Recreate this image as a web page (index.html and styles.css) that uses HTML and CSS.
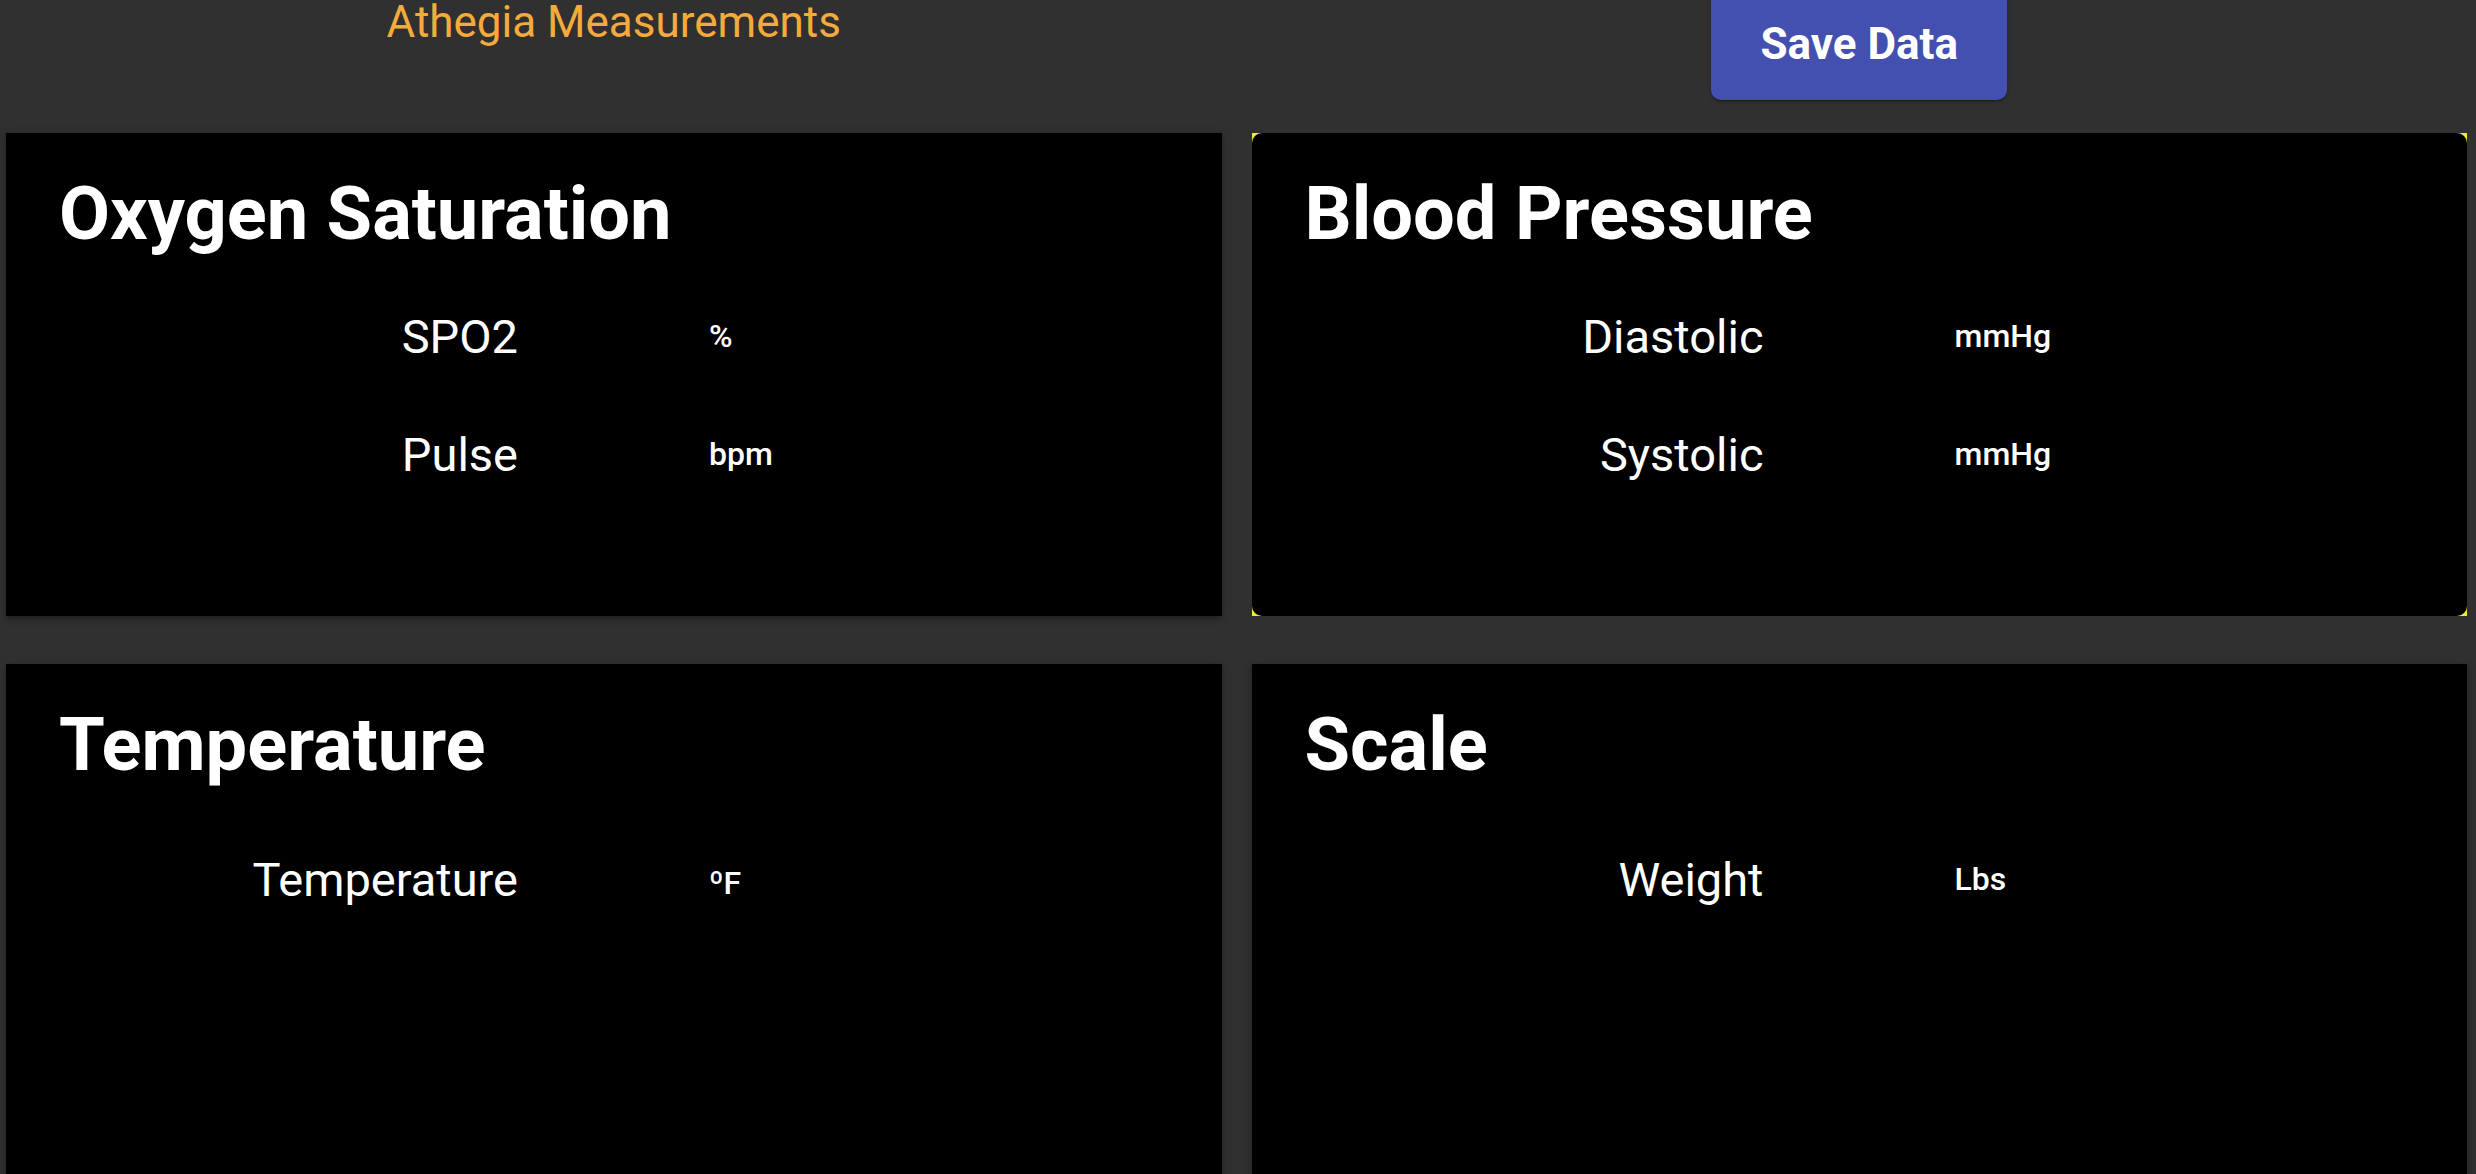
FILE: index.html
```html
<!DOCTYPE html>
<html lang="en">
<head>
<meta charset="utf-8">
<title>Athegia Measurements</title>
<link rel="stylesheet" href="styles.css">
</head>
<body>
<div class="page">
  <header class="topbar">
    <div class="topbar-cell">
      <h1 class="app-title">Athegia Measurements</h1>
    </div>
    <div class="topbar-cell">
      <button class="save-btn" type="button">Save Data</button>
    </div>
  </header>
  <main class="cards">
    <section class="card">
      <h2 class="card-title">Oxygen Saturation</h2>
      <div class="readings">
        <span class="label">SPO2</span><span class="unit">%</span>
        <span class="label">Pulse</span><span class="unit">bpm</span>
      </div>
    </section>
    <div class="card-frame">
      <section class="card card--rounded">
        <h2 class="card-title">Blood Pressure</h2>
        <div class="readings">
          <span class="label">Diastolic</span><span class="unit">mmHg</span>
          <span class="label">Systolic</span><span class="unit">mmHg</span>
        </div>
      </section>
    </div>
    <section class="card">
      <h2 class="card-title">Temperature</h2>
      <div class="readings readings--single">
        <span class="label">Temperature</span><span class="unit unit--deg">ºF</span>
      </div>
    </section>
    <section class="card">
      <h2 class="card-title">Scale</h2>
      <div class="readings readings--single">
        <span class="label">Weight</span><span class="unit">Lbs</span>
      </div>
    </section>
  </main>
</div>
</body>
</html>
```

FILE: styles.css
```css
html, body {
  margin: 0;
  padding: 0;
  height: 100%;
  overflow: hidden;
  background: #303030;
  font-family: Roboto, "Liberation Sans", sans-serif;
  color: #fff;
}

.page {
  padding: 0 9px 0 6px;
}

.topbar {
  display: grid;
  grid-template-columns: 1fr 1fr;
  column-gap: 30px;
  height: 133px;
  align-items: start;
}

.topbar-cell {
  display: flex;
  justify-content: center;
}

.app-title {
  margin: 0;
  font-size: 44px;
  line-height: 1;
  font-weight: 400;
  color: #f5aa3c;
}

.save-btn {
  width: 296px;
  height: 112px;
  margin-top: -12px;
  border: none;
  border-radius: 10px;
  background: #4350af;
  color: #fff;
  font-family: Roboto, "Liberation Sans", sans-serif;
  font-weight: 700;
  font-size: 44px;
  line-height: 1;
  box-shadow: 0 3px 1px -2px rgba(0,0,0,0.2), 0 2px 2px 0 rgba(0,0,0,0.14), 0 1px 5px 0 rgba(0,0,0,0.12);
  cursor: pointer;
}

.cards {
  display: grid;
  grid-template-columns: 1fr 1fr;
  grid-template-rows: 483px 560px;
  column-gap: 30px;
  row-gap: 48px;
}

.card {
  background: #000;
  padding: 44px 0 0 53px;
  box-sizing: border-box;
  height: 100%;
  box-shadow: 0 2px 4px -1px rgba(0,0,0,0.2), 0 4px 5px 0 rgba(0,0,0,0.14), 0 1px 10px 0 rgba(0,0,0,0.12);
}

.card-frame {
  background: #ecec3a;
}

.card--rounded {
  border-radius: 10px;
  box-shadow: none;
}

.card-title {
  margin: 0;
  font-size: 74px;
  line-height: 1;
  font-weight: 700;
}

.readings {
  display: grid;
  grid-template-columns: 459px auto;
  column-gap: 191px;
  grid-auto-rows: 118px;
  align-items: center;
  margin-top: 26px;
}

.readings--single {
  margin-top: 38px;
}

.label {
  text-align: right;
  font-size: 47px;
  line-height: 1;
  font-weight: 400;
}

.unit {
  font-size: 32px;
  line-height: 1;
  font-weight: 500;
}

.unit--deg {
  padding-top: 8px;
}
```
